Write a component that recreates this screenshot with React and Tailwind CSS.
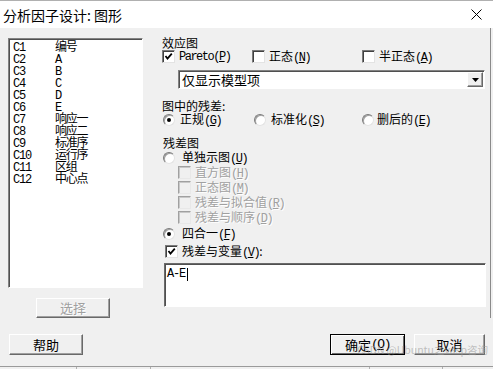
import React from "react";

function M({ children, className = "" }) {
  return (
    <span className={"[font-family:'Liberation_Mono',monospace] tracking-[-1.5px] " + className}>
      {children}
    </span>
  );
}

function Check({ checked = false, disabled = false }) {
  return (
    <span
      className={
        disabled
          ? "relative shrink-0 w-[13px] h-[13px] bg-[#f0f0f0] border border-t-[#a0a0a0] border-l-[#a0a0a0] border-r-[#e8e8e8] border-b-[#e8e8e8] shadow-[inset_1px_1px_0_#c8c8c8]"
          : "relative shrink-0 w-[13px] h-[13px] bg-white border border-t-[#7a7a7a] border-l-[#7a7a7a] border-r-[#e3e3e3] border-b-[#e3e3e3] shadow-[inset_1px_1px_0_#404040]"
      }
    >
      {checked && (
        <svg width="11" height="11" viewBox="0 0 11 11" className="absolute left-0 top-0">
          <path d="M2.5 5 L4.5 7.5 L8.8 2.6" fill="none" stroke="#000" strokeWidth="1.8" />
        </svg>
      )}
    </span>
  );
}

function Radio({ checked = false }) {
  return (
    <span className="relative shrink-0 w-[12px] h-[12px] rounded-full bg-white border border-t-[#7a7a7a] border-l-[#7a7a7a] border-r-[#e3e3e3] border-b-[#e3e3e3] shadow-[inset_1px_1px_0_#a0a0a0] flex items-center justify-center">
      {checked && <span className="w-[4px] h-[4px] rounded-full bg-black" />}
    </span>
  );
}

function Btn({ children, className = "", def = false, disabled = false }) {
  return (
    <div
      className={
        (def
          ? "border border-black shadow-[inset_1px_1px_0_#fff,inset_-1px_-1px_0_#696969] "
          : "border border-t-white border-l-white border-r-[#696969] border-b-[#696969] shadow-[inset_-1px_-1px_0_#a0a0a0] ") +
        "bg-[#f0f0f0] flex items-center justify-center text-[13px] leading-[14px] " +
        (disabled ? "text-[#a0a0a0] [text-shadow:1px_1px_0_#fff] " : "text-black ") +
        className
      }
    >
      {children}
    </div>
  );
}

const items = [
  ["C1", "编号"],
  ["C2", "A"],
  ["C3", "B"],
  ["C4", "C"],
  ["C5", "D"],
  ["C6", "E"],
  ["C7", "响应一"],
  ["C8", "响应二"],
  ["C9", "标准序"],
  ["C10", "运行序"],
  ["C11", "区组"],
  ["C12", "中心点"],
];

export default function App() {
  const dis = "text-[#a0a0a0] [text-shadow:1px_1px_0_#fff]";
  return (
    <div className="relative w-[493px] h-[369px] overflow-hidden bg-[#f0f0f0] text-black text-[12px] leading-[12px] [font-family:'Noto_Sans_CJK_SC','Liberation_Sans',sans-serif]">
      {/* title bar */}
      <div className="h-[28px] bg-white border-t border-[#b0b0b0] flex items-center justify-between pl-[3px] pr-[11px]">
        <span className="text-[14px] leading-[16px] text-black">分析因子设计: 图形</span>
        <svg width="11" height="11" viewBox="0 0 11 11">
          <path d="M0.5 0.5 L10.5 10.5 M10.5 0.5 L0.5 10.5" stroke="#000" strokeWidth="1" />
        </svg>
      </div>

      <div className="flex">
        {/* left column */}
        <div className="w-[157px] flex flex-col pl-[8px] pt-[10px]">
          <div className="w-[135px] h-[250px] bg-white border border-t-[#828282] border-l-[#828282] border-r-white border-b-white shadow-[inset_1px_1px_0_#505050] pl-[4px] pt-[3px]">
            {items.map(([c, n]) => (
              <div key={c} className="flex h-[12px] items-center">
                <span className="w-[42px] [font-family:'Liberation_Mono',monospace] text-[12px] tracking-[-1.2px]">{c}</span>
                <span className="[font-family:'Liberation_Mono','Noto_Sans_CJK_SC',monospace] text-[12px] tracking-[-1.2px] whitespace-nowrap">
                  {n}
                </span>
              </div>
            ))}
          </div>
          <Btn disabled className="mt-[10px] ml-[28px] w-[74px] h-[20px]">选择</Btn>
        </div>

        {/* right column */}
        <div className="w-[334px] h-[290px] flex flex-col pt-[9px] border-r border-[#8a8a8a]">
          <div className="h-[12px] ml-[5px]">效应图</div>
          <div className="h-[13px] mt-[1px] ml-[5px] flex items-center">
            <div className="w-[90px] flex items-center gap-[4px]">
              <Check checked />
              <M>Pareto(<u>P</u>)</M>
            </div>
            <div className="w-[110px] flex items-center gap-[4px]">
              <Check />
              <span>正态<M>(<u>N</u>)</M></span>
            </div>
            <div className="flex items-center gap-[4px]">
              <Check />
              <span>半正态<M>(<u>A</u>)</M></span>
            </div>
          </div>
          <div className="mt-[7px] ml-[21px] w-[307px] h-[19px] bg-white border border-t-[#828282] border-l-[#828282] border-r-white border-b-white shadow-[inset_1px_1px_0_#505050] flex items-center justify-between pl-[3px] pr-[1px]">
            <span className="text-[13px] leading-[14px]">仅显示模型项</span>
            <div className="w-[16px] h-[15px] bg-[#f0f0f0] border border-t-white border-l-white border-r-[#696969] border-b-[#696969] shadow-[inset_-1px_-1px_0_#a0a0a0] flex items-center justify-center">
              <svg width="7" height="4" viewBox="0 0 7 4">
                <path d="M0 0 L7 0 L3.5 4 Z" fill="#000" />
              </svg>
            </div>
          </div>
          <div className="h-[12px] mt-[11px] ml-[5px]">图中的残差:</div>
          <div className="h-[13px] mt-[1px] ml-[6px] flex items-center">
            <div className="w-[91px] flex items-center gap-[5px]">
              <Radio checked />
              <span>正规<M>(<u>G</u>)</M></span>
            </div>
            <div className="w-[108px] flex items-center gap-[5px]">
              <Radio />
              <span>标准化<M>(<u>S</u>)</M></span>
            </div>
            <div className="flex items-center gap-[3px]">
              <Radio />
              <span>删后的<M>(<u>E</u>)</M></span>
            </div>
          </div>
          <div className="h-[12px] mt-[11px] ml-[6px]">残差图</div>
          <div className="h-[13px] mt-[2px] ml-[6px] flex items-center gap-[7px]">
            <Radio />
            <span>单独示图<M>(<u>U</u>)</M></span>
          </div>
          {[
            ["直方图", "H"],
            ["正态图", "M"],
            ["残差与拟合值", "R"],
            ["残差与顺序", "D"],
          ].map(([t, k]) => (
            <div key={t} className="h-[13px] mt-[2px] ml-[21px] flex items-center gap-[4px]">
              <Check disabled />
              <span className={dis}>
                {t}
                <M>(<u>{k}</u>)</M>
              </span>
            </div>
          ))}
          <div className="h-[13px] mt-[3px] ml-[6px] flex items-center gap-[7px]">
            <Radio checked />
            <span>四合一<M>(<u>F</u>)</M></span>
          </div>
          <div className="h-[13px] mt-[5px] ml-[8px] flex items-center gap-[4px]">
            <Check checked />
            <span>残差与变量<M>(<u>V</u>)</M>:</span>
          </div>
          <div className="mt-[5px] ml-[7px] w-[322px] h-[44px] bg-white border border-t-[#6a6a6a] border-l-[#6a6a6a] border-r-white border-b-white shadow-[inset_1px_1px_0_#505050] pl-[2px] pt-[4px] flex items-start">
            <span className="[font-family:'Liberation_Mono',monospace] text-[12px] tracking-[-1.2px] leading-[13px]">A-E</span>
            <span className="ml-[2px] w-[1px] h-[13px] bg-black" />
          </div>
        </div>
      </div>

      {/* bottom buttons */}
      <div className="mt-[16px] flex items-center">
        <Btn className="ml-[9px] w-[74px] h-[21px]">帮助</Btn>
        <div className="flex-1" />
        <Btn def className="w-[75px] h-[21px]">
          确定<M>(<u>O</u>)</M>
        </Btn>
        <Btn className="ml-[9px] mr-[8px] w-[71px] h-[21px]">取消</Btn>
      </div>

      {/* underlying strip */}
      <div className="mt-[11px] h-[3px] border-t border-[#9a9a9a] flex">
        <div className="w-[77px] border-r border-[#b0b0b0]" />
        <div className="w-[74px] border-r border-[#b0b0b0]" />
        <div className="w-[219px] border-r border-[#b0b0b0]" />
        <div className="w-[73px] border-r border-[#b0b0b0]" />
      </div>

      {/* watermark */}
      <div className="absolute left-[357px] top-[344px] text-[10.5px] leading-[12px] text-[#9a9a9a]/60 whitespace-nowrap">
        CSDN @Ubuntu之vasp咨询
      </div>
    </div>
  );
}
